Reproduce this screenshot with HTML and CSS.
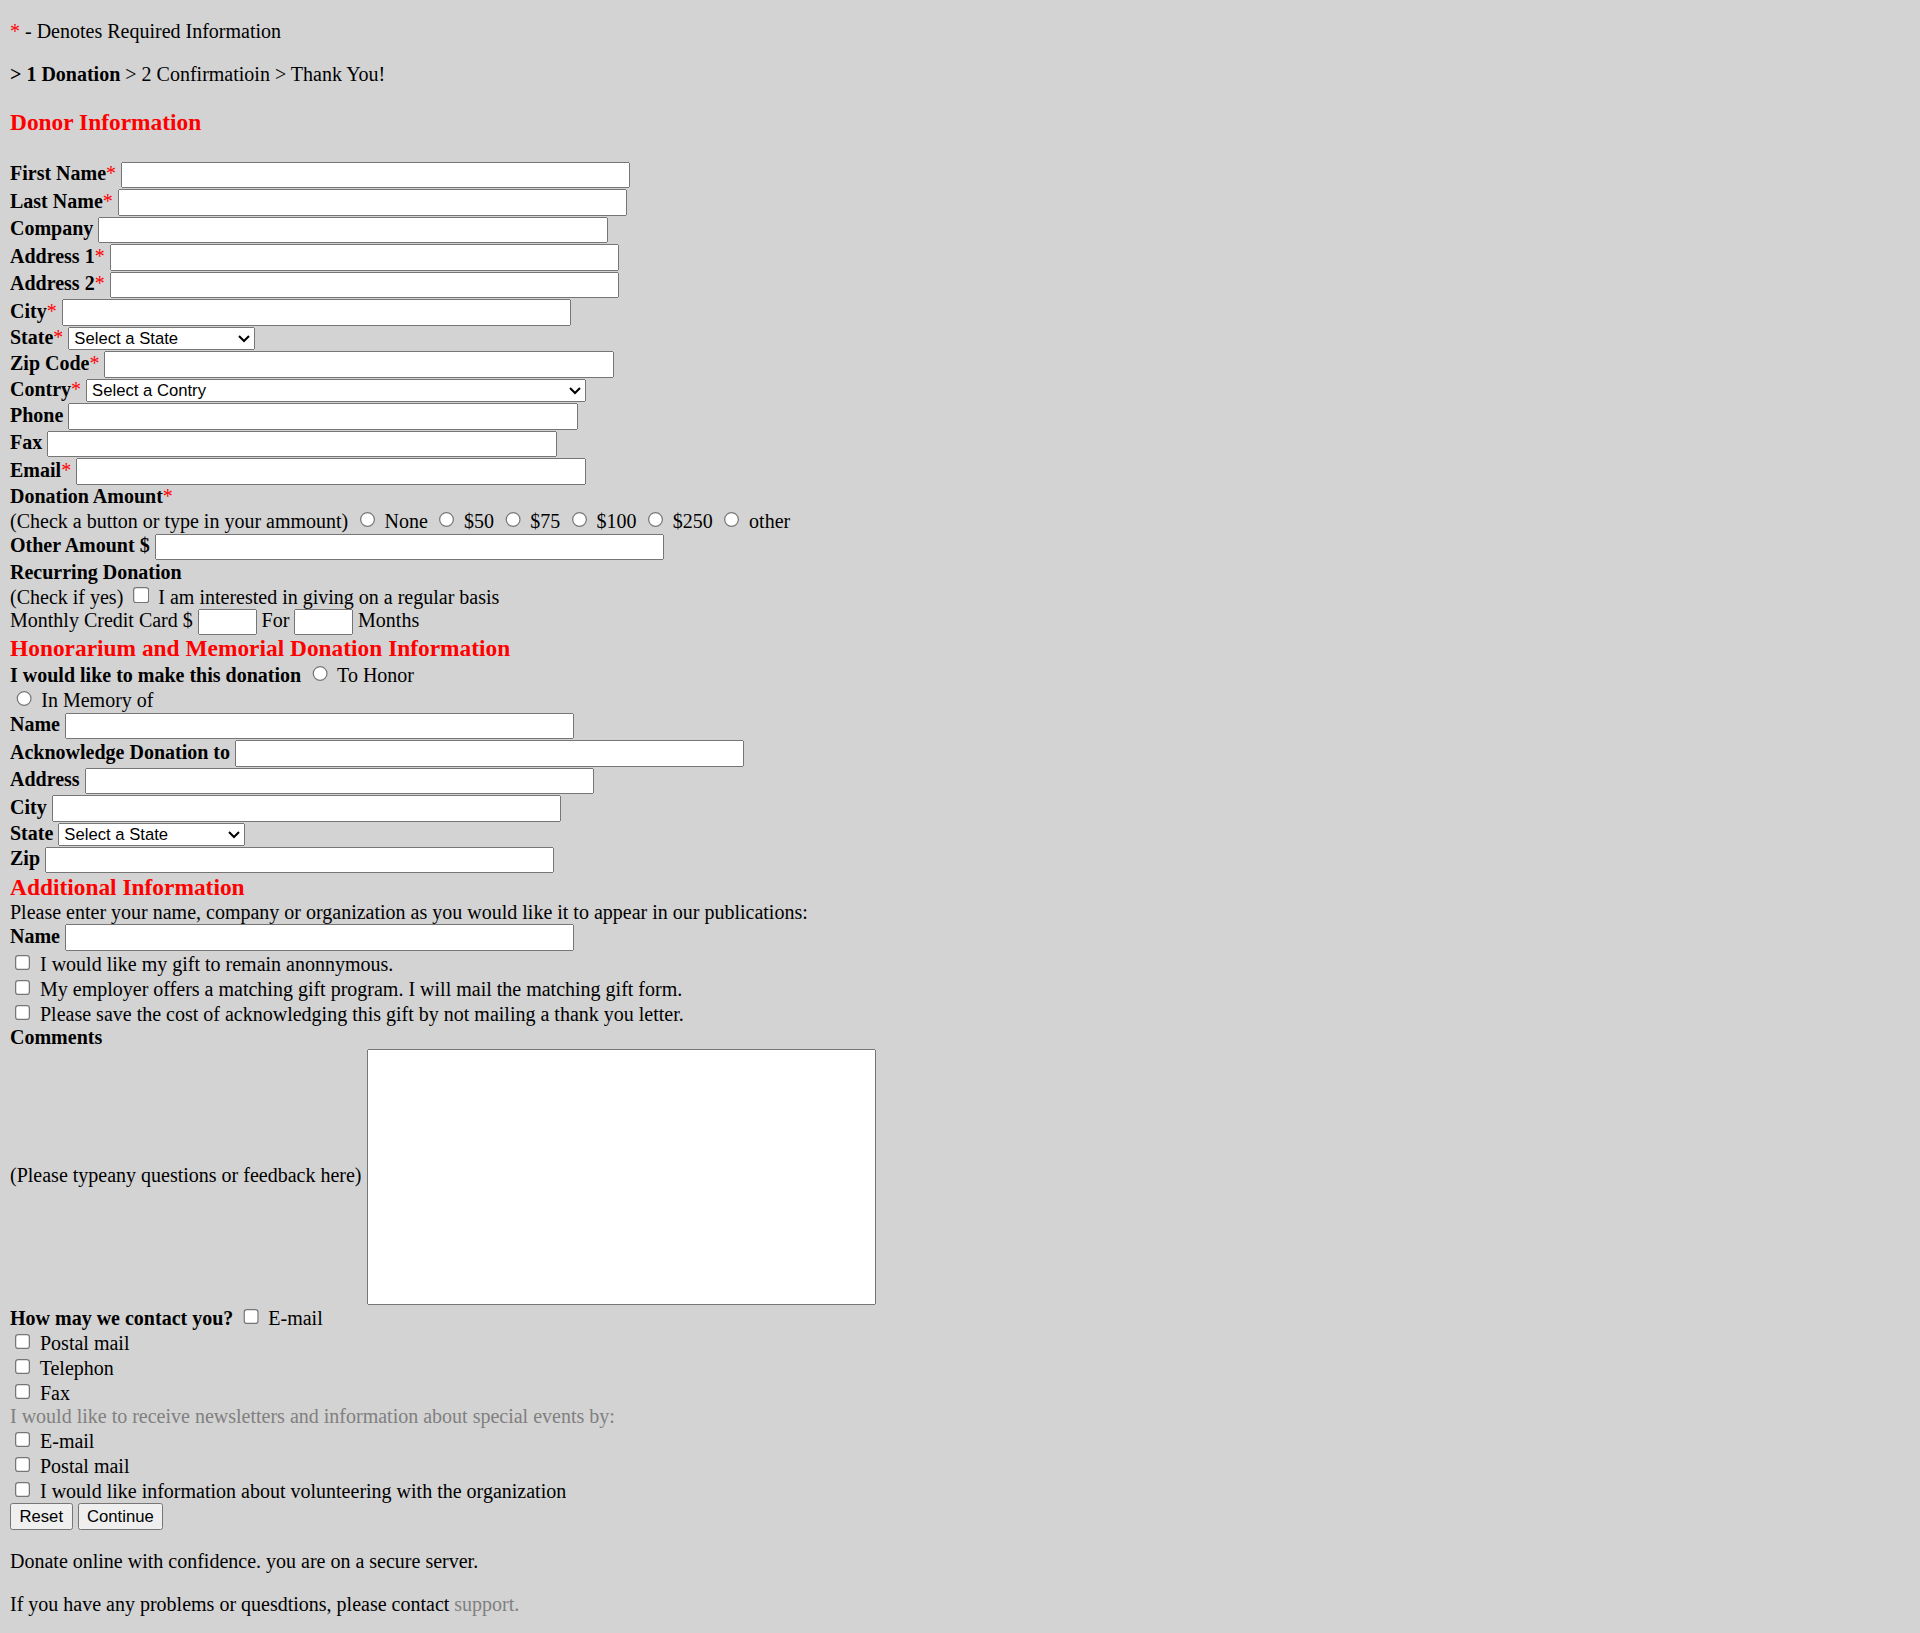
FILE: index.html
```html
<!DOCTYPE html>
<html lang="en">
<head>
<meta charset="utf-8">
<title>Online Donation</title>
<link rel="stylesheet" href="styles.css">
</head>
<body>
<p><span class="req">*</span> - Denotes Required Information</p>
<p><b>&gt; 1 Donation</b> &gt; 2 Confirmatioin &gt; Thank You!</p>
<h3 class="section">Donor Information</h3>
<form class="donate">
<b>First Name</b><span class="req">*</span> <input type="text" class="field"><br>
<b>Last Name</b><span class="req">*</span> <input type="text" class="field"><br>
<b>Company</b> <input type="text" class="field"><br>
<b>Address 1</b><span class="req">*</span> <input type="text" class="field"><br>
<b>Address 2</b><span class="req">*</span> <input type="text" class="field"><br>
<b>City</b><span class="req">*</span> <input type="text" class="field"><br>
<b>State</b><span class="req">*</span> <select class="state"><option>Select a State</option></select><br>
<b>Zip Code</b><span class="req">*</span> <input type="text" class="field"><br>
<b>Contry</b><span class="req">*</span> <select class="country"><option>Select a Contry</option></select><br>
<b>Phone</b> <input type="text" class="field"><br>
<b>Fax</b> <input type="text" class="field"><br>
<b>Email</b><span class="req">*</span> <input type="text" class="field"><br>
<b>Donation Amount</b><span class="req">*</span><br>
(Check a button or type in your ammount) <input type="radio" name="amount"> None <input type="radio" name="amount"> $50 <input type="radio" name="amount"> $75 <input type="radio" name="amount"> $100 <input type="radio" name="amount"> $250 <input type="radio" name="amount"> other<br>
<b>Other Amount $</b> <input type="text" class="field"><br>
<b>Recurring Donation</b><br>
(Check if yes) <input type="checkbox"> I am interested in giving on a regular basis<br>
Monthly Credit Card $ <input type="text" class="small"> For <input type="text" class="small"> Months<br>
<h3 class="section flush">Honorarium and Memorial Donation Information</h3>
<b>I would like to make this donation</b> <input type="radio" name="kind"> To Honor<br>
<input type="radio" name="kind"> In Memory of<br>
<b>Name</b> <input type="text" class="field"><br>
<b>Acknowledge Donation to</b> <input type="text" class="field"><br>
<b>Address</b> <input type="text" class="field"><br>
<b>City</b> <input type="text" class="field"><br>
<b>State</b> <select class="state compact"><option>Select a State</option></select><br>
<b>Zip</b> <input type="text" class="field"><br>
<h3 class="section flush">Additional Information</h3>
Please enter your name, company or organization as you would like it to appear in our publications:<br>
<b>Name</b> <input type="text" class="field"><br>
<input type="checkbox"> I would like my gift to remain anonnymous.<br>
<input type="checkbox"> My employer offers a matching gift program. I will mail the matching gift form.<br>
<input type="checkbox"> Please save the cost of acknowledging this gift by not mailing a thank you letter.<br>
<b>Comments</b><br>
(Please typeany questions or feedback here) <textarea class="comments"></textarea><br>
<b>How may we contact you?</b> <input type="checkbox"> E-mail<br>
<input type="checkbox"> Postal mail<br>
<input type="checkbox"> Telephon<br>
<input type="checkbox"> Fax<br>
<span class="muted">I would like to receive newsletters and information about special events by:</span><br>
<input type="checkbox"> E-mail<br>
<input type="checkbox"> Postal mail<br>
<input type="checkbox"> I would like information about volunteering with the organization<br>
<input type="reset" value="Reset"> <input type="submit" value="Continue">
</form>
<p>Donate online with confidence. you are on a secure server.</p>
<p>If you have any problems or quesdtions, please contact <a class="support" href="#">support.</a></p>
</body>
</html>
```

FILE: styles.css
```css
html {
  zoom: 1.25;
}

body {
  margin: 0 8px 8px;
  background: #d3d3d3;
  color: #000;
  font-family: "Liberation Serif", "Times New Roman", serif;
  font-size: 16px;
}

p {
  margin: 16px 0;
}

.req {
  color: #ff0000;
}

.section {
  color: #ff0000;
  font-size: 1.17em;
  font-weight: bold;
  margin: 1em 0;
}

.section.flush {
  margin: 0;
}

.donate {
  margin: 0;
  padding-top: 1px;
}

input,
select,
button,
textarea {
  font-family: "Liberation Sans", Arial, sans-serif;
  font-size: 13.333px;
}

.field {
  box-sizing: border-box;
  width: 407.5px;
  margin: 0.4px 0;
}

.small {
  box-sizing: border-box;
  width: 47px;
  margin: 0;
}

.state {
  width: 149px;
  margin: 0.4px 0;
}

.state.compact {
  margin: 0;
}

.country {
  width: 400px;
  margin: 0.4px 0;
}

.comments {
  box-sizing: border-box;
  width: 407.5px;
  height: 205px;
  vertical-align: middle;
  resize: none;
}

.muted {
  color: #808080;
}

.support {
  color: #808080;
  text-decoration: none;
}
```
